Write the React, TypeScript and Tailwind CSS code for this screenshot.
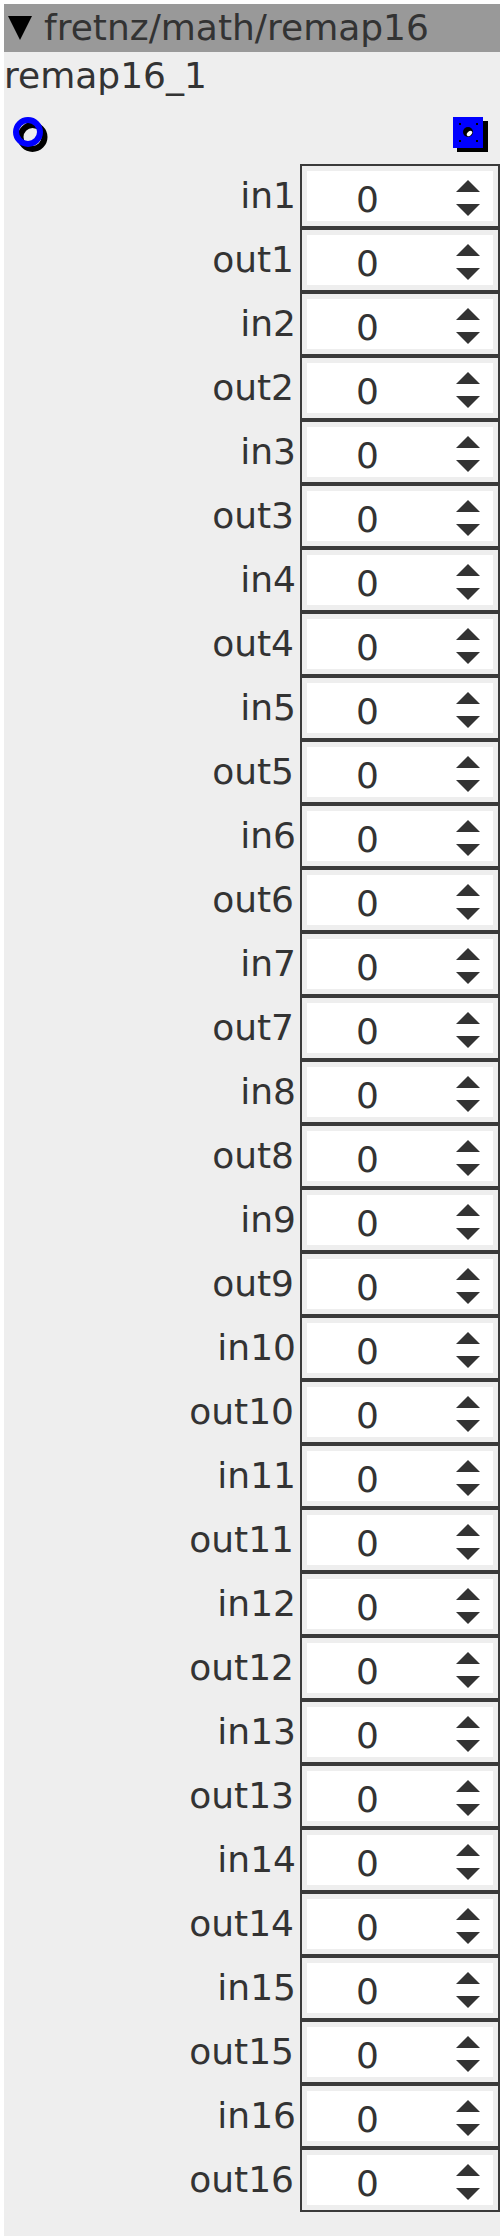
import React from 'react';

const names = Array.from({ length: 16 }, (_, i) => [`in${i + 1}`, `out${i + 1}`]).flat();

const SpinRow: React.FC<{ label: string }> = ({ label }) => (
  <div className="flex h-16 items-center">
    <div className={`mt-[-1px] w-[292px] text-right leading-none ${label.startsWith('out') ? 'pr-[2px]' : ''}`}>{label}</div>
    <div className="ml-[4px] flex h-16 w-[200px] items-center border-2 border-[#3a3a3a] bg-white pr-[18px] shadow-[inset_0_0_0_5px_#eeeeee]">
      <div className="mt-[7px] flex-1 pl-[54px] leading-none">0</div>
      <svg width="24" height="36" viewBox="0 0 24 36" className="mt-[4px] fill-[#333333]">
        <path d="M12 0 L24 12 H0 Z" />
        <path d="M0 24 H24 L12 36 Z" />
      </svg>
    </div>
  </div>
);

export default function App() {
  return (
    <div className="min-h-[2240px] bg-white p-[4px] font-['DejaVu_Sans',sans-serif] text-[36px] text-[#333333]">
      <div className="min-h-[2232px] bg-[#eeeeee]">
        <div className="flex h-[48px] items-center bg-[#999999] pl-[4px] leading-none">
          <span className="mr-[12px] h-0 w-0 border-x-[12px] border-t-[24px] border-x-transparent border-t-black" />
          <span>fretnz/math/remap16</span>
        </div>
        <div className="flex h-[48px] items-center leading-none">remap16_1</div>
        <div className="flex h-[64px] items-start justify-between pl-[9px] pr-[12px] pt-[17px]">
          <svg width="36" height="36" viewBox="0 0 36 36">
            <circle cx="19.5" cy="20" r="12" fill="none" stroke="#000" strokeWidth="6" />
            <circle cx="15" cy="15" r="12" fill="none" stroke="#0000ff" strokeWidth="6" />
          </svg>
          <svg width="35" height="35" viewBox="0 0 35 35">
            <rect x="4" y="4" width="31" height="31" fill="#000" />
            <rect width="30" height="31" fill="#0000ff" />
            <circle cx="15" cy="15" r="5" fill="#000" />
            <ellipse cx="16.5" cy="16.5" rx="3.2" ry="2" transform="rotate(-45 16.5 16.5)" fill="#fff" />
            <rect x="6" y="6" width="2" height="2" fill="#000" />
            <rect x="23" y="6" width="2" height="2" fill="#000" />
            <rect x="6" y="23" width="2" height="2" fill="#000" />
            <rect x="23" y="23" width="2" height="2" fill="#000" />
          </svg>
        </div>
        {names.map((name) => (
          <SpinRow key={name} label={name} />
        ))}
      </div>
    </div>
  );
}
